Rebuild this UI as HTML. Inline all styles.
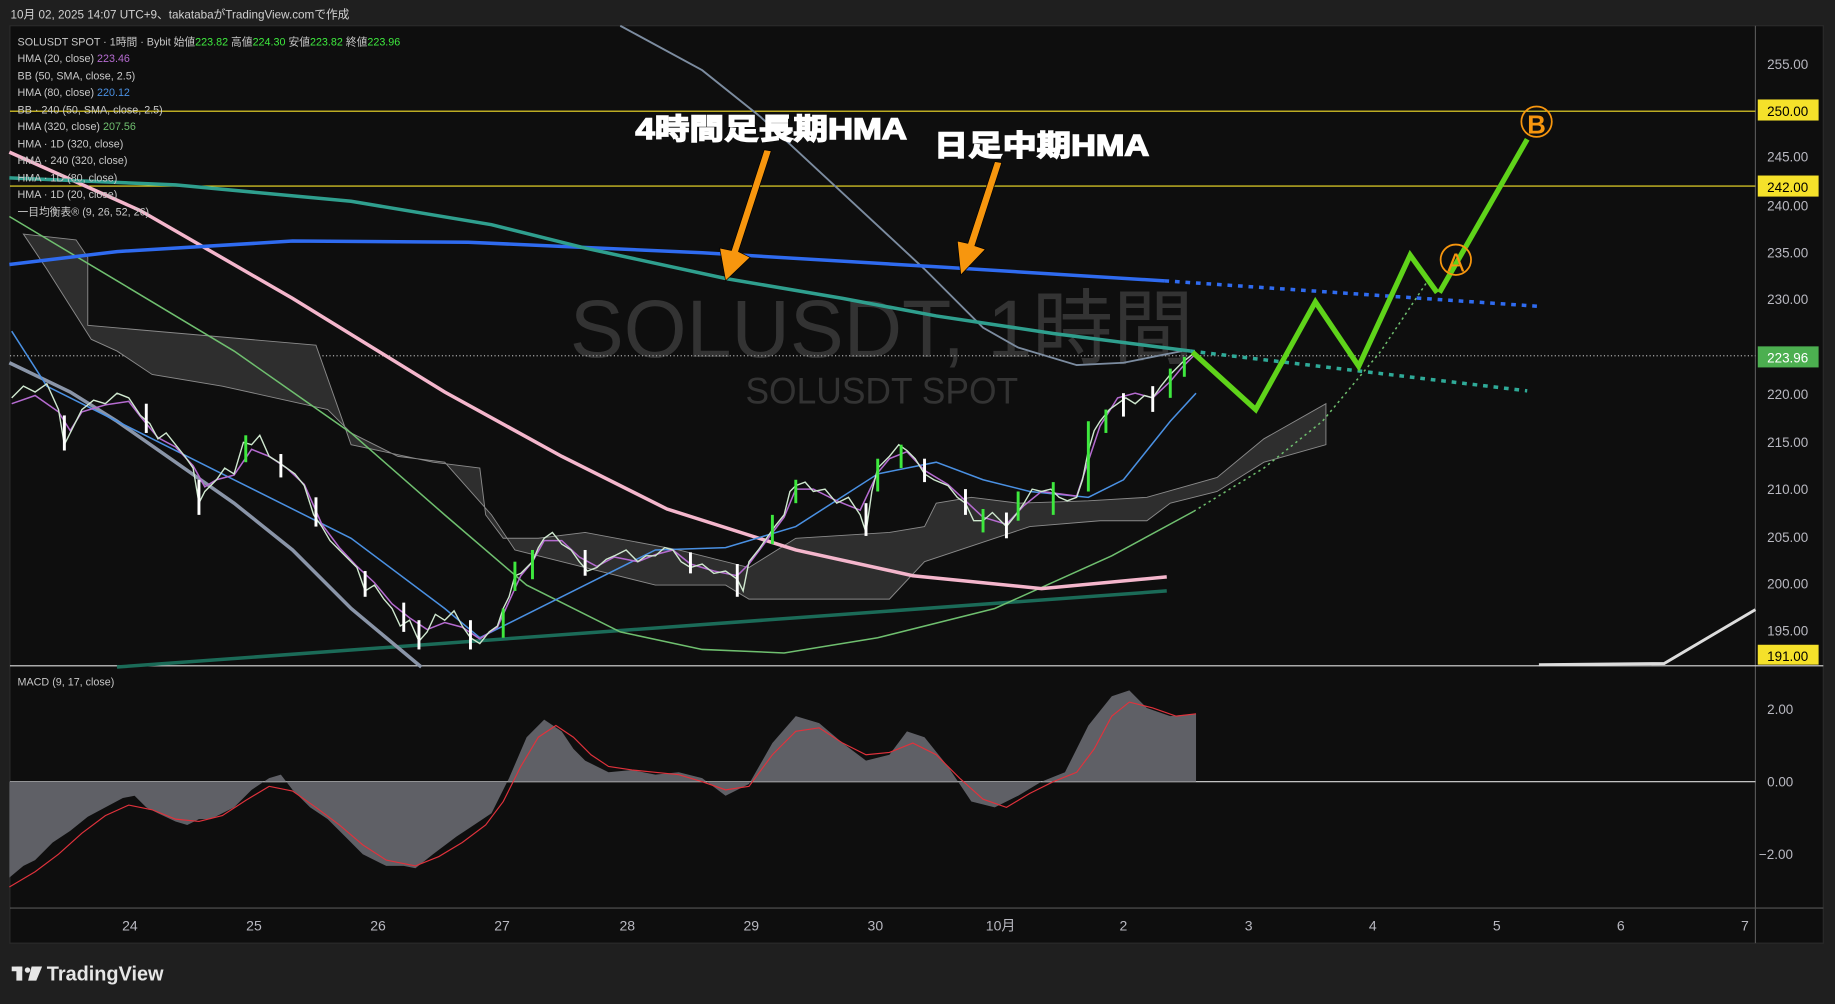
<!DOCTYPE html>
<html><head><meta charset="utf-8"><style>
html,body{margin:0;padding:0;background:#1f1f1f;width:1835px;height:1004px;overflow:hidden}
svg{display:block}
text{font-family:"Liberation Sans","Noto Sans CJK JP",sans-serif}
</style></head><body>
<svg width="1835" height="1004" viewBox="0 0 1568 858" preserveAspectRatio="none">
<rect x="0" y="0" width="1568" height="858" fill="#1f1f1f"/>
<text x="9" y="16" font-size="10" fill="#d0d0d0">10月 02, 2025 14:07 UTC+9、takatabaがTradingView.comで作成</text>
<rect x="8.5" y="22" width="1549.5" height="784" fill="#0e0e0e" stroke="#2a2a2a"/>
<line x1="1500" y1="22" x2="1500" y2="806" stroke="#555" stroke-width="1"/>
<line x1="8.5" y1="776" x2="1558" y2="776" stroke="#555" stroke-width="1"/>
<line x1="8.5" y1="569" x2="1558" y2="569" stroke="#ddd" stroke-width="1"/>
<line x1="8.5" y1="668" x2="1500" y2="668" stroke="#ddd" stroke-width="1"/>
<text x="487" y="305" font-size="70" fill="#3a3a3a" opacity="0.85" textLength="533" lengthAdjust="spacingAndGlyphs">SOLUSDT, 1時間</text>
<text x="637" y="345" font-size="32" fill="#3a3a3a" opacity="0.85" textLength="233" lengthAdjust="spacingAndGlyphs">SOLUSDT SPOT</text>
<line x1="8.5" y1="95" x2="1500" y2="95" stroke="#f5e12a" stroke-width="1"/>
<line x1="8.5" y1="159" x2="1500" y2="159" stroke="#f5e12a" stroke-width="1"/>
<line x1="8.5" y1="304" x2="1500" y2="304" stroke="#aaa" stroke-width="1" stroke-dasharray="1,2"/>
<path d="M20,200 L65,205 L75,220 L75,278 L270,295 L300,380 L370,395 L410,400 L415,440 L430,460 L460,460 L500,455 L580,470 L640,485 L680,460 L760,455 L790,450 L800,430 L830,425 L870,430 L930,428 L980,425 L1040,408 L1080,375 L1133,345 L1133,380 L1080,395 L1040,420 L1000,430 L980,445 L940,445 L880,450 L790,480 L760,512 L640,512 L620,500 L560,500 L480,480 L440,470 L420,440 L380,395 L340,390 L300,370 L280,350 L190,330 L130,320 L100,300 L78,290 L40,230 Z" fill="#2e2e2e" stroke="#8a8a8a" stroke-width="0.8"/>
<line x1="100" y1="570" x2="997" y2="505" stroke="#1b6b58" stroke-width="3"/>
<polyline points="530,22 600,60 650,100 720,165 790,230 840,280 870,297 920,312 960,310 1010,300" fill="none" stroke="#7c8ca0" stroke-width="1.6"/>
<polyline points="8,310 60,335 100,360 150,395 200,430 250,470 300,520 330,545 360,570" fill="none" stroke="#8a95a8" stroke-width="3"/>
<polyline points="8,185 100,240 200,300 300,370 380,440 450,500 530,540 600,555 670,558 750,545 850,520 950,475 1020,437" fill="none" stroke="#6fbf6f" stroke-width="1.3"/>
<polyline points="1020,437 1080,400 1130,360 1180,300 1220,240" fill="none" stroke="#6fbf6f" stroke-width="1.3" stroke-dasharray="2,3"/>
<polyline points="8,130 120,180 250,255 380,335 480,390 570,435 680,470 780,492 890,503 997,493" fill="none" stroke="#f4b6cc" stroke-width="3"/>
<polyline points="8,226 100,215 250,206 400,207 600,216 800,228 995,240" fill="none" stroke="#2f6bf0" stroke-width="3"/>
<line x1="995" y1="240" x2="1318" y2="262" stroke="#2f6bf0" stroke-width="3" stroke-dasharray="4,5"/>
<polyline points="8,152 150,158 300,172 420,192 500,212 620,238 720,255 800,270 900,285 1017,300" fill="none" stroke="#2f9f8e" stroke-width="3"/>
<line x1="1017" y1="300" x2="1305" y2="334" stroke="#2faa98" stroke-width="3" stroke-dasharray="4,5"/>
<polyline points="10,283 40,330 80,350 120,370 200,410 300,460 380,520 410,545 440,530 500,500 560,470 620,468 680,450 750,405 800,395 840,410 880,420 930,425 960,410 1000,360 1022,336" fill="none" stroke="#4a90e2" stroke-width="1.3"/>
<polyline points="10,345 30,338 50,352 60,368 70,352 90,346 110,343 120,356 135,374 150,382 165,398 175,416 185,410 200,406 215,384 230,390 245,400 260,414 275,448 290,468 305,484 320,498 335,516 350,528 365,538 380,532 395,536 410,546 425,536 435,514 445,492 455,480 465,462 480,462 495,476 510,484 525,476 545,480 560,474 575,470 590,482 610,488 630,492 640,482 655,462 670,442 680,418 695,418 715,428 735,436 750,404 760,392 775,386 790,402 810,414 825,428 840,442 860,448 875,432 890,420 905,422 920,424 930,394 940,364 955,340 970,336 985,340 1000,326 1010,314 1020,304" fill="none" stroke="#b56bd0" stroke-width="1.3"/>
<polyline points="10,340 20,330 30,335 40,328 50,350 55,380 60,370 70,350 80,342 90,345 100,336 110,340 120,355 128,362 135,375 142,370 150,380 158,390 165,400 170,430 175,420 185,410 192,400 200,405 208,378 215,380 222,372 230,390 238,395 245,400 252,405 260,415 268,440 275,450 282,462 290,470 298,478 305,485 312,505 320,500 328,512 335,520 342,535 350,530 358,548 365,540 372,525 380,530 388,522 395,535 402,545 410,550 418,540 425,535 430,520 435,510 440,492 445,490 450,485 455,480 460,468 465,460 472,455 480,465 488,470 495,480 502,488 510,485 518,478 525,475 535,470 545,480 552,475 560,475 568,468 575,470 582,480 590,485 600,482 610,490 620,488 630,495 635,505 640,480 648,470 655,460 662,450 670,440 675,420 680,415 688,412 695,420 705,418 715,430 725,425 735,440 740,455 745,420 750,400 755,395 760,390 768,380 775,385 782,392 790,405 798,410 810,415 818,425 825,430 832,445 840,445 848,438 860,450 868,440 875,430 882,418 890,420 898,418 905,425 912,428 920,425 925,410 930,385 935,368 940,360 948,350 955,345 962,340 970,345 978,338 985,340 992,330 1000,320 1005,315 1010,310 1015,306 1020,302" fill="none" stroke="#cfe8cf" stroke-width="1.2"/>
<g stroke="#3ee83e" stroke-width="2.5">
<line x1="440" y1="480" x2="440" y2="505"/><line x1="660" y1="440" x2="660" y2="465"/><line x1="680" y1="410" x2="680" y2="430"/><line x1="750" y1="392" x2="750" y2="420"/><line x1="930" y1="360" x2="930" y2="420"/><line x1="945" y1="350" x2="945" y2="370"/><line x1="1000" y1="315" x2="1000" y2="340"/><line x1="1012" y1="305" x2="1012" y2="322"/><line x1="870" y1="420" x2="870" y2="445"/><line x1="900" y1="412" x2="900" y2="440"/><line x1="210" y1="372" x2="210" y2="395"/><line x1="430" y1="520" x2="430" y2="545"/><line x1="455" y1="470" x2="455" y2="495"/><line x1="840" y1="435" x2="840" y2="455"/><line x1="770" y1="380" x2="770" y2="400"/>
</g>
<g stroke="#ffffff" stroke-width="2.5">
<line x1="55" y1="355" x2="55" y2="385"/><line x1="170" y1="410" x2="170" y2="440"/><line x1="270" y1="425" x2="270" y2="450"/><line x1="312" y1="488" x2="312" y2="510"/><line x1="345" y1="515" x2="345" y2="540"/><line x1="358" y1="530" x2="358" y2="555"/><line x1="402" y1="530" x2="402" y2="555"/><line x1="500" y1="470" x2="500" y2="492"/><line x1="590" y1="472" x2="590" y2="490"/><line x1="630" y1="482" x2="630" y2="510"/><line x1="740" y1="430" x2="740" y2="458"/><line x1="790" y1="392" x2="790" y2="412"/><line x1="825" y1="418" x2="825" y2="440"/><line x1="860" y1="438" x2="860" y2="460"/><line x1="960" y1="336" x2="960" y2="356"/><line x1="985" y1="330" x2="985" y2="352"/><line x1="125" y1="345" x2="125" y2="370"/><line x1="240" y1="388" x2="240" y2="408"/>
</g>
<g font-size="9.2" fill="#c8c8c8">
<text x="15" y="39">SOLUSDT SPOT · 1時間 · Bybit  始値<tspan fill="#3ee83e">223.82</tspan>  高値<tspan fill="#3ee83e">224.30</tspan>  安値<tspan fill="#3ee83e">223.82</tspan>  終値<tspan fill="#3ee83e">223.96</tspan></text>
<text x="15" y="53">HMA (20, close)  <tspan fill="#b56bd0">223.46</tspan></text>
<text x="15" y="68">BB (50, SMA, close, 2.5)</text>
<text x="15" y="82">HMA (80, close)  <tspan fill="#4a90e2">220.12</tspan></text>
<text x="15" y="97">BB · 240 (50, SMA, close, 2.5)</text>
<text x="15" y="111">HMA (320, close)  <tspan fill="#6fbf6f">207.56</tspan></text>
<text x="15" y="126">HMA · 1D (320, close)</text>
<text x="15" y="140">HMA · 240 (320, close)</text>
<text x="15" y="155">HMA · 1D (80, close)</text>
<text x="15" y="169">HMA · 1D (20, close)</text>
<text x="15" y="184">一目均衡表® (9, 26, 52, 26)</text>
</g>
<g font-size="25" font-weight="bold" fill="#fff" stroke="#fff" stroke-width="1.2" paint-order="stroke">
<text x="543" y="119" textLength="232" lengthAdjust="spacingAndGlyphs">4時間足長期HMA</text>
<text x="798" y="133" textLength="184" lengthAdjust="spacingAndGlyphs">日足中期HMA</text>
</g>
<g fill="#f7960e" stroke="#000" stroke-width="0.6">
<polygon points="653,128 659,129 631,215 641,220 620,240 615,212 625,214"/>
<polygon points="850,138 856,139 833,210 842,213 821,235 818,206 827,208"/>
</g>
<polyline points="1019,301 1073,350 1124,258 1161,313 1205,218 1228,250" fill="none" stroke="#5fd31a" stroke-width="4.5" stroke-linejoin="miter"/>
<line x1="1230" y1="250" x2="1305" y2="119" stroke="#5fd31a" stroke-width="4.5"/>
<circle cx="1244" cy="222" r="13" fill="none" stroke="#f7960e" stroke-width="1.5"/>
<text x="1244" y="232" font-size="22" text-anchor="middle" fill="#f7960e">A</text>
<circle cx="1313" cy="104" r="13" fill="none" stroke="#f7960e" stroke-width="1.5"/>
<text x="1313" y="114" font-size="22" font-weight="bold" text-anchor="middle" fill="#f7960e">B</text>
<polyline points="1315,568 1422,567 1500,521" fill="none" stroke="#ddd" stroke-width="2.5"/>
<text x="15" y="586" font-size="9.2" fill="#c8c8c8">MACD (9, 17, close)</text>
<path d="M8,668 L8,750 L20,740 L30,735 L45,720 L60,710 L75,698 L90,690 L105,682 L115,680 L125,690 L135,695 L150,702 L160,705 L170,700 L180,700 L190,695 L200,690 L215,675 L230,665 L240,662 L250,675 L265,690 L280,700 L295,715 L310,730 L330,740 L345,740 L355,742 L370,730 L390,715 L405,705 L420,695 L435,665 L450,630 L465,615 L480,625 L490,640 L500,650 L520,660 L540,658 L560,662 L580,660 L600,665 L620,680 L630,675 L640,670 L660,635 L680,612 L700,618 L720,635 L740,650 L760,645 L775,625 L790,630 L810,655 L830,685 L850,690 L870,680 L890,668 L910,660 L930,620 L950,595 L965,590 L980,605 L1000,612 L1022,610 L1022,668 Z" fill="#5f6066"/>
<polyline points="8,758 30,745 50,730 70,712 90,697 110,688 130,692 150,700 170,702 190,697 210,684 230,672 250,676 270,690 290,705 310,722 330,735 355,740 375,732 395,720 415,705 430,685 445,655 460,630 475,620 490,630 505,645 520,655 540,658 560,660 580,662 600,668 620,675 640,672 660,645 680,625 700,622 720,635 740,645 760,643 780,635 800,645 820,665 840,683 860,690 880,678 900,668 920,660 935,640 950,612 965,600 985,605 1005,612 1022,610" fill="none" stroke="#e0323c" stroke-width="1"/>
<g font-size="11.5" fill="#b8b8c0">
<text x="1510" y="59" font-family="DejaVu Sans">255.00</text>
<text x="1510" y="138" font-family="DejaVu Sans">245.00</text>
<text x="1510" y="180" font-family="DejaVu Sans">240.00</text>
<text x="1510" y="220" font-family="DejaVu Sans">235.00</text>
<text x="1510" y="260" font-family="DejaVu Sans">230.00</text>
<text x="1510" y="341" font-family="DejaVu Sans">220.00</text>
<text x="1510" y="382" font-family="DejaVu Sans">215.00</text>
<text x="1510" y="422" font-family="DejaVu Sans">210.00</text>
<text x="1510" y="463" font-family="DejaVu Sans">205.00</text>
<text x="1510" y="503" font-family="DejaVu Sans">200.00</text>
<text x="1510" y="543" font-family="DejaVu Sans">195.00</text>
<text x="1510" y="610" font-family="DejaVu Sans">2.00</text>
<text x="1510" y="672" font-family="DejaVu Sans">0.00</text>
<text x="1503" y="734" font-family="DejaVu Sans">−2.00</text>
</g>
<rect x="1502" y="85" width="52" height="18" fill="#f5e12a"/>
<text x="1510" y="99" font-size="11.5" fill="#000" font-family="DejaVu Sans">250.00</text>
<rect x="1502" y="150" width="52" height="18" fill="#f5e12a"/>
<text x="1510" y="164" font-size="11.5" fill="#000" font-family="DejaVu Sans">242.00</text>
<rect x="1502" y="296" width="52" height="18" fill="#4caf50"/>
<text x="1510" y="310" font-size="11.5" fill="#fff" font-family="DejaVu Sans">223.96</text>
<rect x="1502" y="551" width="52" height="17" fill="#f5e12a"/>
<text x="1510" y="565" font-size="11.5" fill="#000" font-family="DejaVu Sans">191.00</text>
<g font-size="12" fill="#b8b8c0" text-anchor="middle">
<text x="111" y="795">24</text><text x="217" y="795">25</text><text x="323" y="795">26</text><text x="429" y="795">27</text><text x="536" y="795">28</text><text x="642" y="795">29</text><text x="748" y="795">30</text><text x="855" y="795">10月</text><text x="960" y="795">2</text><text x="1067" y="795">3</text><text x="1173" y="795">4</text><text x="1279" y="795">5</text><text x="1385" y="795">6</text><text x="1491" y="795">7</text>
</g>
<g fill="#e6e6e6">
<rect x="10" y="826" width="9" height="4"/><rect x="14" y="826" width="5" height="12"/>
<circle cx="23.5" cy="829" r="2.3"/>
<polygon points="27,826 36,826 31,838 24,838"/>
</g>
<text x="40" y="838" font-size="17" font-weight="bold" fill="#e6e6e6">TradingView</text>
</svg>
</body></html>
